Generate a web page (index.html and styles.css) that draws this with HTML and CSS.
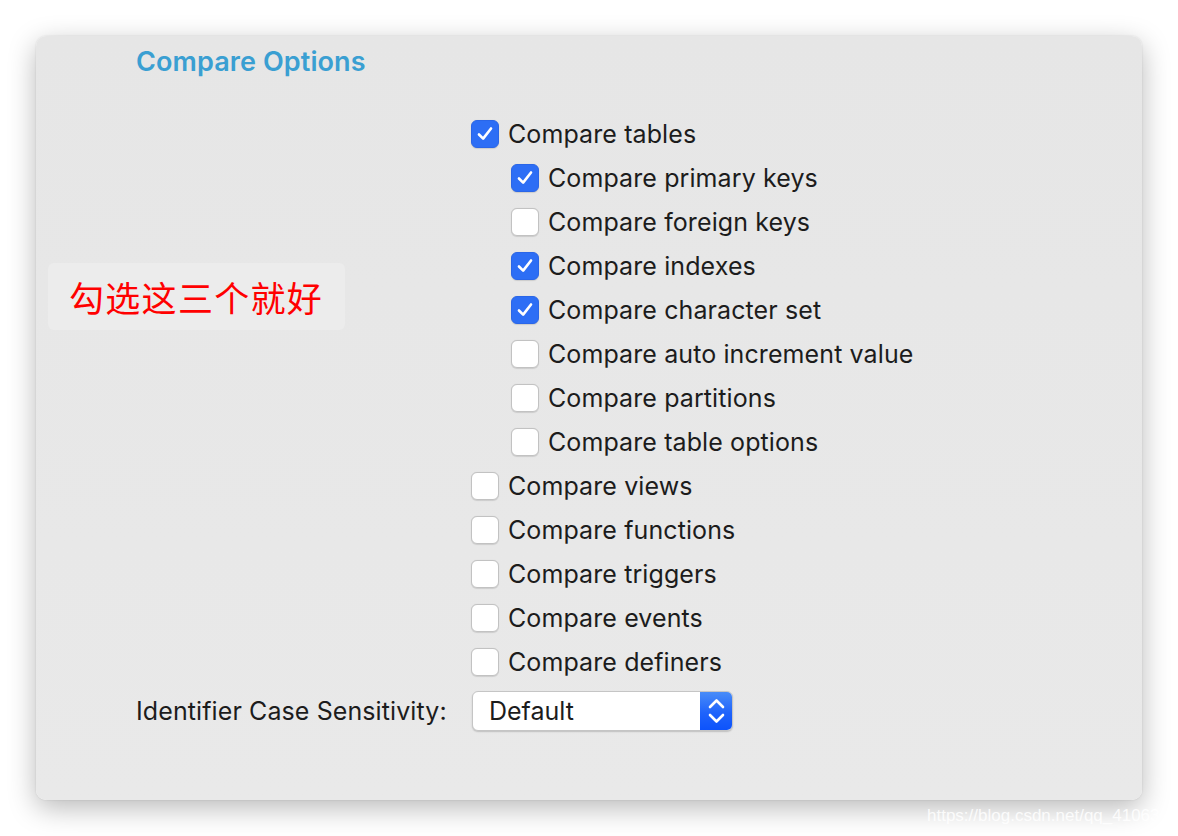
FILE: index.html
```html
<!DOCTYPE html>
<html lang="en">
<head>
<meta charset="utf-8">
<title>Compare Options</title>
<link rel="stylesheet" href="styles.css">
</head>
<body>
<div class="panel">
  <h1 class="title">Compare Options</h1>
  <div class="note">勾选这三个就好</div>
  <ul class="options">
    <li class="opt"><span class="box on"><svg viewBox="0 0 28 28"><path d="M7.5 14.5 L12 19 L20.5 8"/></svg></span>Compare tables</li>
    <li class="opt sub"><span class="box on"><svg viewBox="0 0 28 28"><path d="M7.5 14.5 L12 19 L20.5 8"/></svg></span>Compare primary keys</li>
    <li class="opt sub"><span class="box"></span>Compare foreign keys</li>
    <li class="opt sub"><span class="box on"><svg viewBox="0 0 28 28"><path d="M7.5 14.5 L12 19 L20.5 8"/></svg></span>Compare indexes</li>
    <li class="opt sub"><span class="box on"><svg viewBox="0 0 28 28"><path d="M7.5 14.5 L12 19 L20.5 8"/></svg></span>Compare character set</li>
    <li class="opt sub"><span class="box"></span>Compare auto increment value</li>
    <li class="opt sub"><span class="box"></span>Compare partitions</li>
    <li class="opt sub"><span class="box"></span>Compare table options</li>
    <li class="opt"><span class="box"></span>Compare views</li>
    <li class="opt"><span class="box"></span>Compare functions</li>
    <li class="opt"><span class="box"></span>Compare triggers</li>
    <li class="opt"><span class="box"></span>Compare events</li>
    <li class="opt"><span class="box"></span>Compare definers</li>
  </ul>
  <div class="select-row">
    <span class="label">Identifier Case Sensitivity:</span>
    <div class="select">
      <span class="value">Default</span>
      <span class="stepper"><svg viewBox="0 0 33 40"><path d="M10 16 L16.5 9.5 L23 16"/><path d="M10 24 L16.5 30.5 L23 24"/></svg></span>
    </div>
  </div>
</div>
<div class="watermark">https://blog.csdn.net/qq_41063141</div>
</body>
</html>
```
FILE: styles.css
```css
html, body {
  margin: 0;
  padding: 0;
  background: #ffffff;
}
body {
  width: 1178px;
  height: 836px;
  position: relative;
  overflow: hidden;
  font-family: Inter, "Noto Sans", "Liberation Sans", sans-serif;
}
.panel {
  position: relative;
  margin: 36px 0 0 36px;
  width: 1106px;
  height: 764px;
  box-sizing: border-box;
  padding: 10px 0 0 100px;
  background: linear-gradient(180deg, #e6e6e6 0%, #e9e9e9 100%);
  border-radius: 10px;
  box-shadow: 0 8px 28px rgba(0, 0, 0, 0.28), 0 0 2px rgba(0,0,0,0.12);
}
.title {
  margin: 0;
  font-size: 27px;
  line-height: 32px;
  font-weight: 600;
  color: #3a9fd2;
  letter-spacing: 0.1px;
}
.note {
  position: absolute;
  left: 12px;
  top: 227px;
  width: 297px;
  height: 67px;
  box-sizing: border-box;
  padding-left: 21px;
  display: flex;
  align-items: center;
  background: #ececec;
  border-radius: 6px;
  color: #ff0000;
  font-family: "Noto Sans CJK SC", sans-serif;
  font-size: 35px;
  font-weight: 400;
  letter-spacing: 1.3px;
}
.options {
  list-style: none;
  margin: 34px 0 0 335px;
  padding: 0;
}
.opt {
  height: 44px;
  display: flex;
  align-items: center;
  gap: 9px;
  font-size: 25px;
  color: #1c1c1c;
  letter-spacing: 0.1px;
}
.opt.sub {
  padding-left: 40px;
}
.box {
  width: 28px;
  height: 28px;
  box-sizing: border-box;
  border-radius: 6px;
  background: #ffffff;
  border: 1px solid #c2c2c2;
  box-shadow: 0 0.5px 1px rgba(0,0,0,0.12);
  display: flex;
  flex: none;
}
.box.on {
  background: #2d6ef5;
  border-color: #2a66e8;
}
.box svg {
  width: 26px;
  height: 26px;
}
.box svg path {
  fill: none;
  stroke: #ffffff;
  stroke-width: 2.8;
  stroke-linecap: round;
  stroke-linejoin: round;
}
.select-row {
  display: flex;
  align-items: center;
  margin-top: 7px;
  height: 40px;
}
.label {
  width: 336px;
  font-size: 25px;
  color: #1c1c1c;
  letter-spacing: 0.1px;
}
.select {
  width: 261px;
  height: 40px;
  box-sizing: border-box;
  display: flex;
  align-items: center;
  background: #ffffff;
  border: 1px solid #c5c5c5;
  border-radius: 6px;
  box-shadow: 0 1px 1.5px rgba(0,0,0,0.18);
  overflow: hidden;
}
.value {
  flex: 1;
  padding-left: 16px;
  font-size: 25px;
  color: #1c1c1c;
}
.stepper {
  width: 33px;
  height: 40px;
  margin: -1px -1px -1px 0;
  background: linear-gradient(180deg, #4a8ef8 0%, #1f63fb 55%, #0c52fb 100%);
  display: flex;
}
.stepper svg {
  width: 33px;
  height: 40px;
}
.stepper svg path {
  fill: none;
  stroke: #ffffff;
  stroke-width: 2.6;
  stroke-linecap: round;
  stroke-linejoin: round;
}
.watermark {
  position: absolute;
  left: 927px;
  top: 806px;
  font-family: "Liberation Sans", Arial, sans-serif;
  font-size: 17px;
  color: rgba(255, 255, 255, 0.85);
  white-space: nowrap;
}
```
